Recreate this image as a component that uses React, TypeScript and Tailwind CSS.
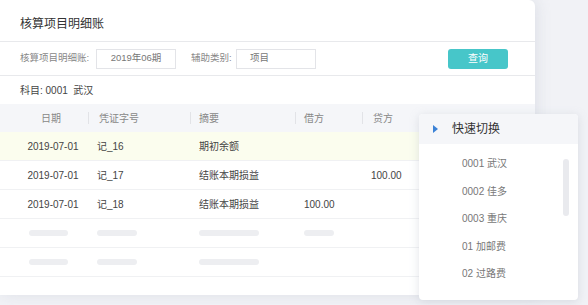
import React from "react";

const cols = ["w-[88px]", "w-[102px]", "w-[105px]", "w-[67px]", "flex-1"];

function Cell({ i, children, center }: { i: number; children?: React.ReactNode; center?: boolean }) {
  return (
    <div className={`${cols[i]} flex items-center ${center ? "justify-center pl-[18px]" : "pl-[9px]"} h-full`}>{children}</div>
  );
}

const rows = [
  { d: "2019-07-01", v: "记_16", s: "期初余额", j: "", c: "", bg: "bg-[#fbfdee]" },
  { d: "2019-07-01", v: "记_17", s: "结账本期损益", j: "", c: "100.00", bg: "bg-white" },
  { d: "2019-07-01", v: "记_18", s: "结账本期损益", j: "100.00", c: "", bg: "bg-white" },
];

function Bar({ w }: { w: string }) {
  return <div className={`${w} h-[6px] rounded-full bg-[#edeef1]`} />;
}

export default function App() {
  return (
    <div
      className="relative w-[588px] h-[305px] overflow-hidden bg-[#f1f2f6] text-[#333]"
      style={{ fontFamily: "'Liberation Sans','Noto Sans CJK SC',sans-serif" }}
    >
      <div className="flex h-[295px]">
        <div className="w-[535px] h-full bg-white rounded-tr-[6px] shadow-[2px_0_14px_rgba(200,205,215,0.45)] flex flex-col">
          <div className="h-[42px] flex items-center pl-[20px] pt-[7px] text-[12px] text-[#333] border-b border-[#e8e9ec]">
            核算项目明细账
          </div>
          <div className="h-[34px] flex items-center pl-[20px] pr-[27px] text-[9.5px] text-[#888] border-b border-[#e8e9ec] whitespace-nowrap">
            <span className="w-[76px] shrink-0">核算项目明细账:</span>
            <div className="w-[80px] h-[20px] shrink-0 border border-[#e3e4e8] flex items-center justify-center text-[#777]">
              2019年06期
            </div>
            <span className="ml-[15px] w-[45px] shrink-0">辅助类别:</span>
            <div className="w-[80px] h-[20px] shrink-0 border border-[#e3e4e8] flex items-center pl-[13px] text-[#777]">
              项目
            </div>
            <div className="ml-auto w-[60px] h-[20px] rounded-[3px] bg-[#47c6c9] text-white text-[10px] flex items-center justify-center">
              查询
            </div>
          </div>
          <div className="h-[28px] flex items-center pl-[20px] text-[10px] text-[#444]">科目: 0001&nbsp;&nbsp;武汉</div>
          <div className="h-[28px] bg-[#f5f6f9] flex items-center text-[10px] text-[#888]">
            <div className="w-[88px] flex items-center justify-center pl-[14px]">日期</div>
            <div className="w-px h-[12px] bg-[#e2e3e7]" />
            <div className="w-[101px] flex items-center pl-[10px]">凭证字号</div>
            <div className="w-px h-[12px] bg-[#e2e3e7]" />
            <div className="w-[104px] flex items-center pl-[8px]">摘要</div>
            <div className="w-px h-[12px] bg-[#e2e3e7]" />
            <div className="w-[66px] flex items-center pl-[8px]">借方</div>
            <div className="w-px h-[12px] bg-[#e2e3e7]" />
            <div className="flex-1 pl-[10px]">贷方</div>
          </div>
          {rows.map((r, k) => (
            <div key={k} className={`h-[29px] flex items-center text-[10px] text-[#444] border-b border-[#f0f1f3] ${r.bg}`}>
              <Cell i={0} center>{r.d}</Cell>
              <Cell i={1}>{r.v}</Cell>
              <Cell i={2}>{r.s}</Cell>
              <Cell i={3}>{r.j}</Cell>
              <Cell i={4}>{r.c}</Cell>
            </div>
          ))}
          {[0, 1].map((k) => (
            <div key={k} className="h-[29px] flex items-center border-b border-[#f0f1f3]">
              <div className="w-[88px] flex justify-end pr-[20px]"><Bar w="w-[39px]" /></div>
              <Cell i={1}><Bar w="w-[40px]" /></Cell>
              <Cell i={2}><Bar w="w-[60px]" /></Cell>
              <Cell i={3}>{k === 0 ? <Bar w="w-[30px]" /> : null}</Cell>
              <Cell i={4} />
            </div>
          ))}
        </div>
        <div className="flex-1" />
      </div>

      <div className="absolute left-[419px] top-[114px] w-[159px] h-[186px] bg-white rounded-[4px] shadow-[0_2px_10px_rgba(170,175,190,0.35)] overflow-hidden">
        <div className="h-[30px] bg-[#f5f6f9] flex items-center pl-[14px]">
          <svg width="5" height="8" viewBox="0 0 5 8">
            <path d="M0 0 L5 4 L0 8 Z" fill="#3b82d6" />
          </svg>
          <span className="ml-[14px] text-[12px] text-[#333]">快速切换</span>
        </div>
        <div className="relative flex flex-col pl-[43px] pt-[6px] text-[10px] text-[#777]">
          {["0001 武汉", "0002 佳多", "0003 重庆", "01 加邮费", "02 过路费"].map((t) => (
            <div key={t} className="h-[27.5px] flex items-center">{t}</div>
          ))}
          <div className="absolute right-[9px] top-[15px] w-[6px] h-[57px] rounded-full bg-[#e9eaee]" />
        </div>
      </div>
    </div>
  );
}
